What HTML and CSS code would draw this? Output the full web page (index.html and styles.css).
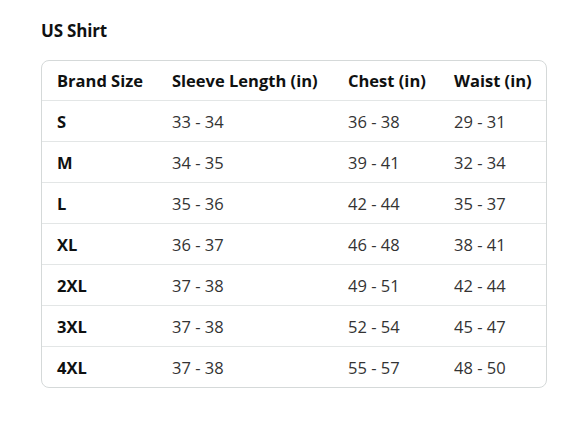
FILE: index.html
```html
<!DOCTYPE html>
<html>
<head>
<meta charset="utf-8">
<link rel="stylesheet" href="styles.css">
</head>
<body>
<div class="page">
  <h2 class="title">US Shirt</h2>
  <div class="card">
    <table class="sizes">
      <colgroup>
        <col class="c1"><col class="c2"><col class="c3"><col class="c4">
      </colgroup>
      <thead>
        <tr><th>Brand Size</th><th>Sleeve Length (in)</th><th>Chest (in)</th><th>Waist (in)</th></tr>
      </thead>
      <tbody>
        <tr><th>S</th><td>33 - 34</td><td>36 - 38</td><td>29 - 31</td></tr>
        <tr><th>M</th><td>34 - 35</td><td>39 - 41</td><td>32 - 34</td></tr>
        <tr><th>L</th><td>35 - 36</td><td>42 - 44</td><td>35 - 37</td></tr>
        <tr><th>XL</th><td>36 - 37</td><td>46 - 48</td><td>38 - 41</td></tr>
        <tr><th>2XL</th><td>37 - 38</td><td>49 - 51</td><td>42 - 44</td></tr>
        <tr><th>3XL</th><td>37 - 38</td><td>52 - 54</td><td>45 - 47</td></tr>
        <tr><th>4XL</th><td>37 - 38</td><td>55 - 57</td><td>48 - 50</td></tr>
      </tbody>
    </table>
  </div>
</div>
</body>
</html>
```

FILE: styles.css
```css
html, body {
  margin: 0;
  padding: 0;
  background: #ffffff;
}
body {
  font-family: "Open Sans", "Noto Sans", "Liberation Sans", sans-serif;
  color: #0f1111;
}
.page {
  padding: 20px 41px 0 41px;
  width: 506px;
}
.title {
  margin: 0 0 18px 0;
  font-size: 17px;
  font-weight: 700;
  line-height: 22px;
  letter-spacing: -0.2px;
}
.card {
  border: 1px solid #d5d9d9;
  border-radius: 8px;
  overflow: hidden;
}
.sizes {
  width: 100%;
  border-collapse: collapse;
  table-layout: fixed;
  font-size: 16.5px;
}
.c1 { width: 115px; }
.c2 { width: 176px; }
.c3 { width: 106px; }
.c4 { width: auto; }
.sizes th, .sizes td {
  text-align: left;
  padding: 0 0 0 15px;
  height: 40px;
  border-top: 1px solid #e3e6e6;
  white-space: nowrap;
}
.sizes thead th {
  border-top: none;
  height: 39px;
}
.sizes th {
  font-weight: 700;
  color: #0f1111;
}
.sizes td {
  font-weight: 400;
  color: #333333;
}
```
